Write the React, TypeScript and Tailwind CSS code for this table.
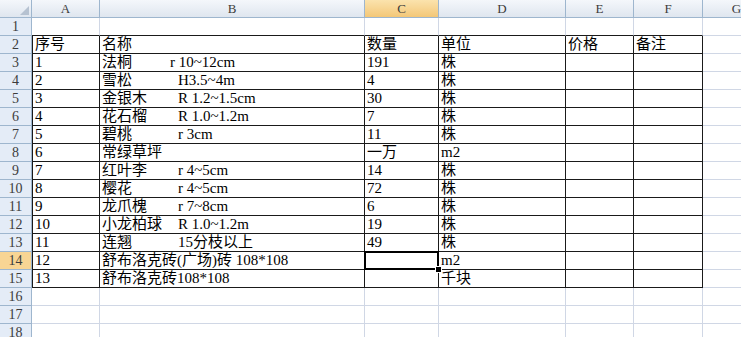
import React from "react";

type Row = {
  n: string;
  name: string;
  spec?: string;
  nameW?: string;
  qty?: string;
  unit?: string;
};

const items: Row[] = [
  { n: "1", name: "法桐", spec: "r 10~12cm", nameW: "w-[68px]", qty: "191", unit: "株" },
  { n: "2", name: "雪松", spec: "H3.5~4m", qty: "4", unit: "株" },
  { n: "3", name: "金银木", spec: "R 1.2~1.5cm", qty: "30", unit: "株" },
  { n: "4", name: "花石榴", spec: "R 1.0~1.2m", qty: "7", unit: "株" },
  { n: "5", name: "碧桃", spec: "r 3cm", qty: "11", unit: "株" },
  { n: "6", name: "常绿草坪", qty: "一万", unit: "m2" },
  { n: "7", name: "红叶李", spec: "r 4~5cm", qty: "14", unit: "株" },
  { n: "8", name: "樱花", spec: "r 4~5cm", qty: "72", unit: "株" },
  { n: "9", name: "龙爪槐", spec: "r 7~8cm", qty: "6", unit: "株" },
  { n: "10", name: "小龙柏球", spec: "R 1.0~1.2m", qty: "19", unit: "株" },
  { n: "11", name: "连翘", spec: "15分枝以上", qty: "49", unit: "株" },
  { n: "12", name: "舒布洛克砖(广场)砖 108*108", unit: "m2" },
  { n: "13", name: "舒布洛克砖108*108", unit: "千块" },
];

const cols = [
  { key: "A", w: "w-[68px]" },
  { key: "B", w: "w-[265px]" },
  { key: "C", w: "w-[74px]" },
  { key: "D", w: "w-[127px]" },
  { key: "E", w: "w-[68px]" },
  { key: "F", w: "w-[69px]" },
  { key: "G", w: "w-[68px]" },
];

function CornerCell() {
  return (
    <div className="relative w-[32px] shrink-0 h-[18px] border-r border-b border-[#9eb6ce] bg-linear-to-b from-[#f4f7fb] to-[#dfe6ef]">
      <svg className="absolute right-[2px] bottom-[2px]" width="9" height="9" viewBox="0 0 9 9">
        <polygon points="9,0 9,9 0,9" fill="#b6c2d1" />
      </svg>
    </div>
  );
}

function cellContent(r: number, c: number) {
  if (r === 2) return ["序号", "名称", "数量", "单位", "价格", "备注", ""][c];
  const it = items[r - 3];
  if (!it) return "";
  if (c === 0) return it.n;
  if (c === 1) {
    if (!it.spec) return it.name;
    return (
      <>
        <span className={"inline-block " + (it.nameW ?? "w-[76px]")}>{it.name}</span>
        {it.spec}
      </>
    );
  }
  if (c === 2) return it.qty ?? "";
  if (c === 3) return it.unit ?? "";
  return "";
}

function Cell({ r, c }: { r: number; c: number }) {
  const inTable = r >= 2 && r <= 15 && c <= 5;
  const bottomBlack = r >= 1 && r <= 15 && c <= 5;
  const active = r === 14 && c === 2;
  let cls = cols[c].w + " shrink-0 h-[18px] border-b border-r px-[2px] leading-[17px] whitespace-pre text-[15px] text-black overflow-visible";
  cls += bottomBlack ? " border-b-[#1a1a1a]" : " border-b-[#d0d7e5]";
  cls += inTable ? " border-r-[#1a1a1a]" : " border-r-[#d0d7e5]";
  if (inTable && c === 0) cls += " border-l border-l-[#1a1a1a]";
  if (active) cls += " relative z-10";
  return (
    <div className={cls}>
      {cellContent(r, c)}
      {active && (
        <>
          <div className="absolute -left-[1px] -top-[1px] -right-[1px] -bottom-[1px] border-2 border-black" />
          <div className="absolute -right-[4px] -bottom-[4px] w-[7px] h-[7px] bg-black border border-white" />
        </>
      )}
    </div>
  );
}

export default function App() {
  const rowNums = Array.from({ length: 18 }, (_, i) => i + 1);
  return (
    <div className="w-[741px] h-[337px] overflow-hidden bg-white font-['Liberation_Serif','Noto_Sans_CJK_SC',serif]">
      {/* column headers */}
      <div className="flex">
        <CornerCell />
        {cols.map((col) =>
          col.key === "C" ? (
            <div key={col.key} className={col.w + " shrink-0 h-[18px] border-r border-b border-[#9eb6ce] bg-linear-to-b from-[#fbe3ad] to-[#f3c777] text-center text-[13px] leading-[17px] text-[#3c3c3c]"}>
              {col.key}
            </div>
          ) : (
            <div key={col.key} className={col.w + " shrink-0 h-[18px] border-r border-b border-[#9eb6ce] bg-linear-to-b from-[#f4f7fb] to-[#dfe6ef] text-center text-[13px] leading-[17px] text-[#3c3c3c]"}>
              {col.key}
            </div>
          )
        )}
      </div>

      {/* rows */}
      {rowNums.map((r) => (
        <div key={r} className="flex">
          <div
            className={
              r === 14
                ? "w-[32px] shrink-0 h-[18px] border-r border-b border-[#9eb6ce] bg-[#f8d594] text-center text-[14px] leading-[17px] text-[#3c3c3c]"
                : "w-[32px] shrink-0 h-[18px] border-r border-b border-[#9eb6ce] bg-[#e4ecf7] text-center text-[14px] leading-[17px] text-[#3c3c3c]"
            }
          >
            {r}
          </div>
          {cols.map((_, c) => (
            <Cell key={c} r={r} c={c} />
          ))}
        </div>
      ))}
    </div>
  );
}
